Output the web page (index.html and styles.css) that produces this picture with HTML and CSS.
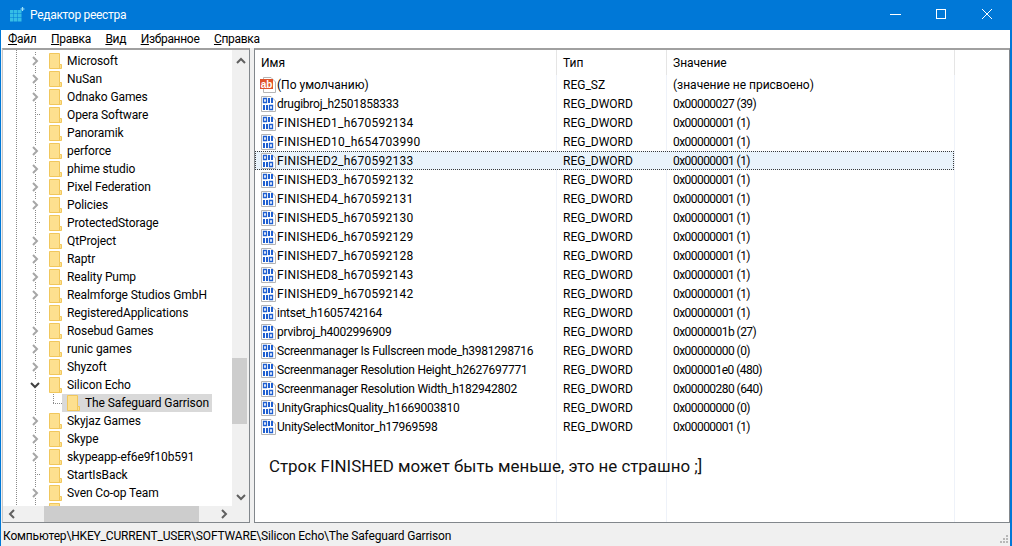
FILE: index.html
```html
<!DOCTYPE html>
<html lang="ru">
<head>
  <meta charset="UTF-8">
  <title>Редактор реестра</title>
  <link rel="stylesheet" href="styles.css">
</head>
<body>
  <svg class="defs" width="0" height="0">
    <symbol id="folder" viewBox="0 0 14 16">
      <path d="M1.500 .5H11.500V11.500H13.500V15.500H1.500Z" fill="#fde08f" stroke="#f1c75c"/>
      <path d="M11.500 11.500V15.500" stroke="#f1c75c"/>
    </symbol>
    <symbol id="closed" viewBox="0 0 10 10">
      <path d="M3 1L7 5L3 9" fill="none" stroke="#a6a6a6" stroke-width="2"/>
    </symbol>
    <symbol id="open" viewBox="0 0 10 10">
      <path d="M1 3L5 7L9 3" fill="none" stroke="#404040" stroke-width="2"/>
    </symbol>
    <symbol id="bin" viewBox="0 0 16 16">
      <path d="M1.500 .5H11L15.500 5V15.500H1.500Z" fill="#fff" stroke="#b4b4b4"/>
      <path d="M3.500 2.500H6.500V6.500H3.500ZM9.500 9.500H12.500V13.500H9.500Z" fill="none" stroke="#1f5fd0" stroke-width="1.300"/>
      <path d="M9 2V7M12 2V7M4 9V14M7 9V14" stroke="#1f5fd0" stroke-width="2"/>
    </symbol>
  </svg>

  <div class="window">
    <header class="titlebar">
      <svg class="appicon" width="16" height="16" viewBox="0 0 16 16">
        <g fill="#35bde6">
          <rect x="1" y="3" width="3.500" height="3.500"/><rect x="5" y="3" width="3.500" height="3.500"/><rect x="9" y="3" width="3.500" height="3.500"/>
          <rect x="1" y="7" width="3.500" height="3.500"/><rect x="5" y="7" width="3.500" height="3.500"/><rect x="9" y="7" width="3.500" height="3.500"/>
          <rect x="1" y="11" width="3.500" height="3.500"/><rect x="5" y="11" width="3.500" height="3.500"/><rect x="9" y="11" width="3.500" height="3.500"/>
        </g>
        <path d="M13.500 0V4M11.500 2H15.500" stroke="#9fe3f7" stroke-width="1.200"/>
      </svg>
      <span class="title">Редактор реестра</span>
      <div class="winbtn">
        <svg width="46" height="30" viewBox="0 0 46 30"><path d="M18 14.500H29" stroke="#fff"/></svg>
        <svg width="46" height="30" viewBox="0 0 46 30"><rect x="18.500" y="9.500" width="9" height="9" fill="none" stroke="#fff"/></svg>
        <svg width="46" height="30" viewBox="0 0 46 30"><path d="M18 9L28 19M28 9L18 19" stroke="#fff"/></svg>
      </div>
    </header>

    <nav class="menu">
      <span><u>Ф</u>айл</span>
      <span><u>П</u>равка</span>
      <span><u>В</u>ид</span>
      <span><u>И</u>збранное</span>
      <span><u>С</u>правка</span>
    </nav>

    <main class="panes">
      <section class="treepane">
        <div class="tree">
          <div class="node"><svg class="exp"><use href="#closed"/></svg><svg class="fld"><use href="#folder"/></svg>Microsoft</div>
          <div class="node"><svg class="exp"><use href="#closed"/></svg><svg class="fld"><use href="#folder"/></svg>NuSan</div>
          <div class="node"><svg class="exp"><use href="#closed"/></svg><svg class="fld"><use href="#folder"/></svg>Odnako Games</div>
          <div class="node leaf"><span class="exp"></span><svg class="fld"><use href="#folder"/></svg>Opera Software</div>
          <div class="node leaf"><span class="exp"></span><svg class="fld"><use href="#folder"/></svg>Panoramik</div>
          <div class="node"><svg class="exp"><use href="#closed"/></svg><svg class="fld"><use href="#folder"/></svg>perforce</div>
          <div class="node"><svg class="exp"><use href="#closed"/></svg><svg class="fld"><use href="#folder"/></svg>phime studio</div>
          <div class="node"><svg class="exp"><use href="#closed"/></svg><svg class="fld"><use href="#folder"/></svg>Pixel Federation</div>
          <div class="node"><svg class="exp"><use href="#closed"/></svg><svg class="fld"><use href="#folder"/></svg>Policies</div>
          <div class="node leaf"><span class="exp"></span><svg class="fld"><use href="#folder"/></svg>ProtectedStorage</div>
          <div class="node"><svg class="exp"><use href="#closed"/></svg><svg class="fld"><use href="#folder"/></svg>QtProject</div>
          <div class="node"><svg class="exp"><use href="#closed"/></svg><svg class="fld"><use href="#folder"/></svg>Raptr</div>
          <div class="node"><svg class="exp"><use href="#closed"/></svg><svg class="fld"><use href="#folder"/></svg>Reality Pump</div>
          <div class="node"><svg class="exp"><use href="#closed"/></svg><svg class="fld"><use href="#folder"/></svg>Realmforge Studios GmbH</div>
          <div class="node leaf"><span class="exp"></span><svg class="fld"><use href="#folder"/></svg>RegisteredApplications</div>
          <div class="node"><svg class="exp"><use href="#closed"/></svg><svg class="fld"><use href="#folder"/></svg>Rosebud Games</div>
          <div class="node"><svg class="exp"><use href="#closed"/></svg><svg class="fld"><use href="#folder"/></svg>runic games</div>
          <div class="node"><svg class="exp"><use href="#closed"/></svg><svg class="fld"><use href="#folder"/></svg>Shyzoft</div>
          <div class="node"><svg class="exp"><use href="#open"/></svg><svg class="fld"><use href="#folder"/></svg>Silicon Echo</div>
          <div class="node child"><span class="hilite"><svg class="fld"><use href="#folder"/></svg>The Safeguard Garrison</span></div>
          <div class="node"><svg class="exp"><use href="#closed"/></svg><svg class="fld"><use href="#folder"/></svg>Skyjaz Games</div>
          <div class="node"><svg class="exp"><use href="#closed"/></svg><svg class="fld"><use href="#folder"/></svg>Skype</div>
          <div class="node"><svg class="exp"><use href="#closed"/></svg><svg class="fld"><use href="#folder"/></svg>skypeapp-ef6e9f10b591</div>
          <div class="node leaf"><span class="exp"></span><svg class="fld"><use href="#folder"/></svg>StartIsBack</div>
          <div class="node"><svg class="exp"><use href="#closed"/></svg><svg class="fld"><use href="#folder"/></svg>Sven Co-op Team</div>
          <div class="node"><svg class="exp"><use href="#closed"/></svg><svg class="fld"><use href="#folder"/></svg></div>
        </div>
        <div class="vscroll">
          <svg width="16" height="16" viewBox="0 0 16 16"><path d="M4 10L8 6L12 10" fill="none" stroke="#606060" stroke-width="2"/></svg>
          <div class="vtrack"><div class="vthumb"></div></div>
          <svg width="16" height="16" viewBox="0 0 16 16"><path d="M4 6L8 10L12 6" fill="none" stroke="#606060" stroke-width="2"/></svg>
        </div>
        <div class="hscroll">
          <svg width="16" height="16" viewBox="0 0 16 16"><path d="M10 4L6 8L10 12" fill="none" stroke="#606060" stroke-width="2"/></svg>
          <div class="htrack"><div class="hthumb"></div></div>
          <svg width="16" height="16" viewBox="0 0 16 16"><path d="M6 4L10 8L6 12" fill="none" stroke="#606060" stroke-width="2"/></svg>
        </div>
      </section>

      <section class="listpane">
        <div class="row head"><span>Имя</span><span>Тип</span><span>Значение</span></div>
        <div class="rows">
          <div class="row"><span><svg class="ico" viewBox="0 0 16 16"><path d="M3.500 .5H11L15.500 5V15.500H3.500Z" fill="#fff" stroke="#b4b4b4"/><rect x="0" y="2" width="13" height="10" fill="#e0532a"/><text x="6.500" y="10.500" class="ab">ab</text></svg>(По умолчанию)</span><span>REG_SZ</span><span class="plain">(значение не присвоено)</span></div>
          <div class="row"><span class="tight"><svg class="ico"><use href="#bin"/></svg>drugibroj_h2501858333</span><span>REG_DWORD</span><span>0x00000027 (39)</span></div>
          <div class="row"><span class="caps"><svg class="ico"><use href="#bin"/></svg>FINISHED1_h670592134</span><span>REG_DWORD</span><span>0x00000001 (1)</span></div>
          <div class="row"><span class="caps"><svg class="ico"><use href="#bin"/></svg>FINISHED10_h654703990</span><span>REG_DWORD</span><span>0x00000001 (1)</span></div>
          <div class="row selected"><span class="caps"><svg class="ico"><use href="#bin"/></svg>FINISHED2_h670592133</span><span>REG_DWORD</span><span>0x00000001 (1)</span></div>
          <div class="row"><span class="caps"><svg class="ico"><use href="#bin"/></svg>FINISHED3_h670592132</span><span>REG_DWORD</span><span>0x00000001 (1)</span></div>
          <div class="row"><span class="caps"><svg class="ico"><use href="#bin"/></svg>FINISHED4_h670592131</span><span>REG_DWORD</span><span>0x00000001 (1)</span></div>
          <div class="row"><span class="caps"><svg class="ico"><use href="#bin"/></svg>FINISHED5_h670592130</span><span>REG_DWORD</span><span>0x00000001 (1)</span></div>
          <div class="row"><span class="caps"><svg class="ico"><use href="#bin"/></svg>FINISHED6_h670592129</span><span>REG_DWORD</span><span>0x00000001 (1)</span></div>
          <div class="row"><span class="caps"><svg class="ico"><use href="#bin"/></svg>FINISHED7_h670592128</span><span>REG_DWORD</span><span>0x00000001 (1)</span></div>
          <div class="row"><span class="caps"><svg class="ico"><use href="#bin"/></svg>FINISHED8_h670592143</span><span>REG_DWORD</span><span>0x00000001 (1)</span></div>
          <div class="row"><span class="caps"><svg class="ico"><use href="#bin"/></svg>FINISHED9_h670592142</span><span>REG_DWORD</span><span>0x00000001 (1)</span></div>
          <div class="row"><span class="tight"><svg class="ico"><use href="#bin"/></svg>intset_h1605742164</span><span>REG_DWORD</span><span>0x00000001 (1)</span></div>
          <div class="row"><span class="tight"><svg class="ico"><use href="#bin"/></svg>prvibroj_h4002996909</span><span>REG_DWORD</span><span>0x0000001b (27)</span></div>
          <div class="row"><span class="tight"><svg class="ico"><use href="#bin"/></svg>Screenmanager Is Fullscreen mode_h3981298716</span><span>REG_DWORD</span><span>0x00000000 (0)</span></div>
          <div class="row"><span class="tight"><svg class="ico"><use href="#bin"/></svg>Screenmanager Resolution Height_h2627697771</span><span>REG_DWORD</span><span>0x000001e0 (480)</span></div>
          <div class="row"><span class="tight"><svg class="ico"><use href="#bin"/></svg>Screenmanager Resolution Width_h182942802</span><span>REG_DWORD</span><span>0x00000280 (640)</span></div>
          <div class="row"><span class="tight"><svg class="ico"><use href="#bin"/></svg>UnityGraphicsQuality_h1669003810</span><span>REG_DWORD</span><span>0x00000000 (0)</span></div>
          <div class="row"><span class="tight"><svg class="ico"><use href="#bin"/></svg>UnitySelectMonitor_h17969598</span><span>REG_DWORD</span><span>0x00000001 (1)</span></div>
        </div>
        <p class="note">Строк FINISHED может быть меньше, это не страшно ;]</p>
      </section>
    </main>

    <footer class="status">
      <span>Компьютер\HKEY_CURRENT_USER\SOFTWARE\Silicon Echo\The Safeguard Garrison</span>
      <svg class="grip" width="9" height="9" viewBox="0 0 9 9">
        <path d="M6 0h2v2H6zM3 3h2v2H3zM6 3h2v2H6zM0 6h2v2H0zM3 6h2v2H3zM6 6h2v2H6z" fill="#b8b8b8"/>
      </svg>
    </footer>
  </div>
</body>
</html>
```

FILE: styles.css
```css
* {
  box-sizing: border-box;
}

body {
  margin: 0;
  font-family: Roboto, sans-serif;
  font-size: 12px;
  color: #000;
  overflow: hidden;
}

.defs {
  display: block;
  height: 0;
}

.window {
  width: 1012px;
  height: 546px;
  display: flex;
  flex-direction: column;
  background: #f0f0f0;
  border-left: 1px solid #0078d7;
  border-right: 2px solid #0078d7;
}

.titlebar {
  height: 30px;
  flex: none;
  background: #0078d7;
  color: #fff;
  display: flex;
  align-items: center;
  padding-left: 8px;
}

.appicon {
  margin-right: 5px;
}

.title {
  flex: 1;
  letter-spacing: -0.3px;
}

.winbtn {
  display: flex;
}

.winbtn svg {
  display: block;
}

.menu {
  height: 18px;
  flex: none;
  background: #fff;
  display: flex;
  align-items: center;
  gap: 14.500px;
  padding-left: 7px;
  letter-spacing: -0.3px;
}

.panes {
  flex: 1;
  min-height: 0;
  display: flex;
  gap: 4px;
  padding-left: 1px;
}

.treepane {
  width: 248px;
  flex: none;
  display: grid;
  grid-template-columns: 1fr 17px;
  grid-template-rows: 1fr 16px;
  border-top: 2px solid #a0a0a0;
  border-right: 1px solid #82878c;
  border-bottom: 1px solid #82878c;
  border-left: 1px solid #c8c8c8;
}

.tree {
  background: #fff repeating-linear-gradient(#8a8a8a 0 1px, transparent 1px 2px) 13px 0 / 1px 100% no-repeat;
  padding-top: 2px;
  overflow: hidden;
  letter-spacing: -0.1px;
}

.node {
  height: 18px;
  display: flex;
  align-items: center;
  white-space: nowrap;
  padding-left: 27px;
  background: repeating-linear-gradient(#8a8a8a 0 1px, transparent 1px 2px) 32px 0 / 1px 100% no-repeat;
}

.exp {
  width: 10px;
  height: 10px;
  margin-right: 8px;
  background: #fff;
  flex: none;
}

.leaf .exp {
  background: repeating-linear-gradient(90deg, #8a8a8a 0 1px, transparent 1px 2px) 5px 4px / 7px 1px no-repeat;
}

.fld {
  width: 14px;
  height: 16px;
  margin-right: 5px;
  flex: none;
}

.child {
  padding-left: 59px;
  background:
    repeating-linear-gradient(#8a8a8a 0 1px, transparent 1px 2px) 50px 0 / 1px 9px no-repeat,
    repeating-linear-gradient(90deg, #8a8a8a 0 1px, transparent 1px 2px) 50px 9px / 9px 1px no-repeat,
    repeating-linear-gradient(#8a8a8a 0 1px, transparent 1px 2px) 32px 0 / 1px 100% no-repeat;
}

.hilite {
  display: flex;
  align-items: center;
  width: 150px;
  height: 18px;
  padding-left: 4px;
  background: #d9d9d9;
}

.vscroll {
  display: flex;
  flex-direction: column;
  align-items: center;
  background: #f0f0f0;
  padding: 3px 0 1px;
}

.vtrack {
  flex: 1;
  width: 100%;
  padding-top: 289px;
}

.vthumb {
  width: 15px;
  height: 66px;
  background: #cdcdcd;
}

.hscroll {
  display: flex;
  align-items: center;
  background: #f0f0f0;
  padding-left: 1px;
}

.htrack {
  flex: 1;
  height: 100%;
  padding-left: 24px;
}

.hthumb {
  width: 155px;
  height: 100%;
  background: #cdcdcd;
}

.listpane {
  flex: 1;
  position: relative;
  background: #fff;
  border-top: 2px solid #a0a0a0;
  border-left: 1px solid #82878c;
  border-right: 1px solid #82878c;
  border-bottom: 1px solid #82878c;
  display: flex;
  flex-direction: column;
}

.row {
  display: grid;
  grid-template-columns: 302px 110px 288px;
  height: 19px;
  align-items: center;
  white-space: nowrap;
}

.row span {
  display: flex;
  align-items: center;
  padding-left: 6px;
}

.row span:first-child {
  padding-left: 5px;
}

.row span:nth-child(3) {
  letter-spacing: -0.55px;
}

.row span.plain,
.head span:nth-child(3) {
  letter-spacing: 0;
}

.row .caps {
  letter-spacing: 0.25px;
}

.row .tight {
  letter-spacing: -0.25px;
}

.ico {
  width: 16px;
  height: 16px;
  margin-right: 1px;
  flex: none;
}

.ab {
  font-family: "Liberation Sans", sans-serif;
  font-size: 10px;
  font-weight: bold;
  fill: #fff;
  text-anchor: middle;
}

.head {
  height: 25px;
  flex: none;
  align-items: stretch;
}

.head span {
  border-right: 1px solid #e5e5e5;
}

.head span:first-child {
  padding-left: 6px;
}

.rows {
  flex: 1;
  background:
    linear-gradient(#eef2f9, #eef2f9) 301px 0 / 1px 100% no-repeat,
    linear-gradient(#eef2f9, #eef2f9) 411px 0 / 1px 100% no-repeat,
    linear-gradient(#eef2f9, #eef2f9) 699px 0 / 1px 100% no-repeat;
}

.selected {
  width: 699px;
  background: #e9f3fb;
  outline: 1px dotted #3a3a3a;
  outline-offset: -1px;
}

.note {
  position: absolute;
  left: 14px;
  top: 406px;
  margin: 0;
  font-size: 16.900px;
  color: #111;
}

.status {
  height: 23px;
  flex: none;
  display: flex;
  align-items: center;
  justify-content: space-between;
  padding: 2px 1px 0 2px;
  background: #f0f0f0;
  letter-spacing: -0.17px;
}

.grip {
  align-self: flex-end;
  margin-bottom: 2px;
}
```
